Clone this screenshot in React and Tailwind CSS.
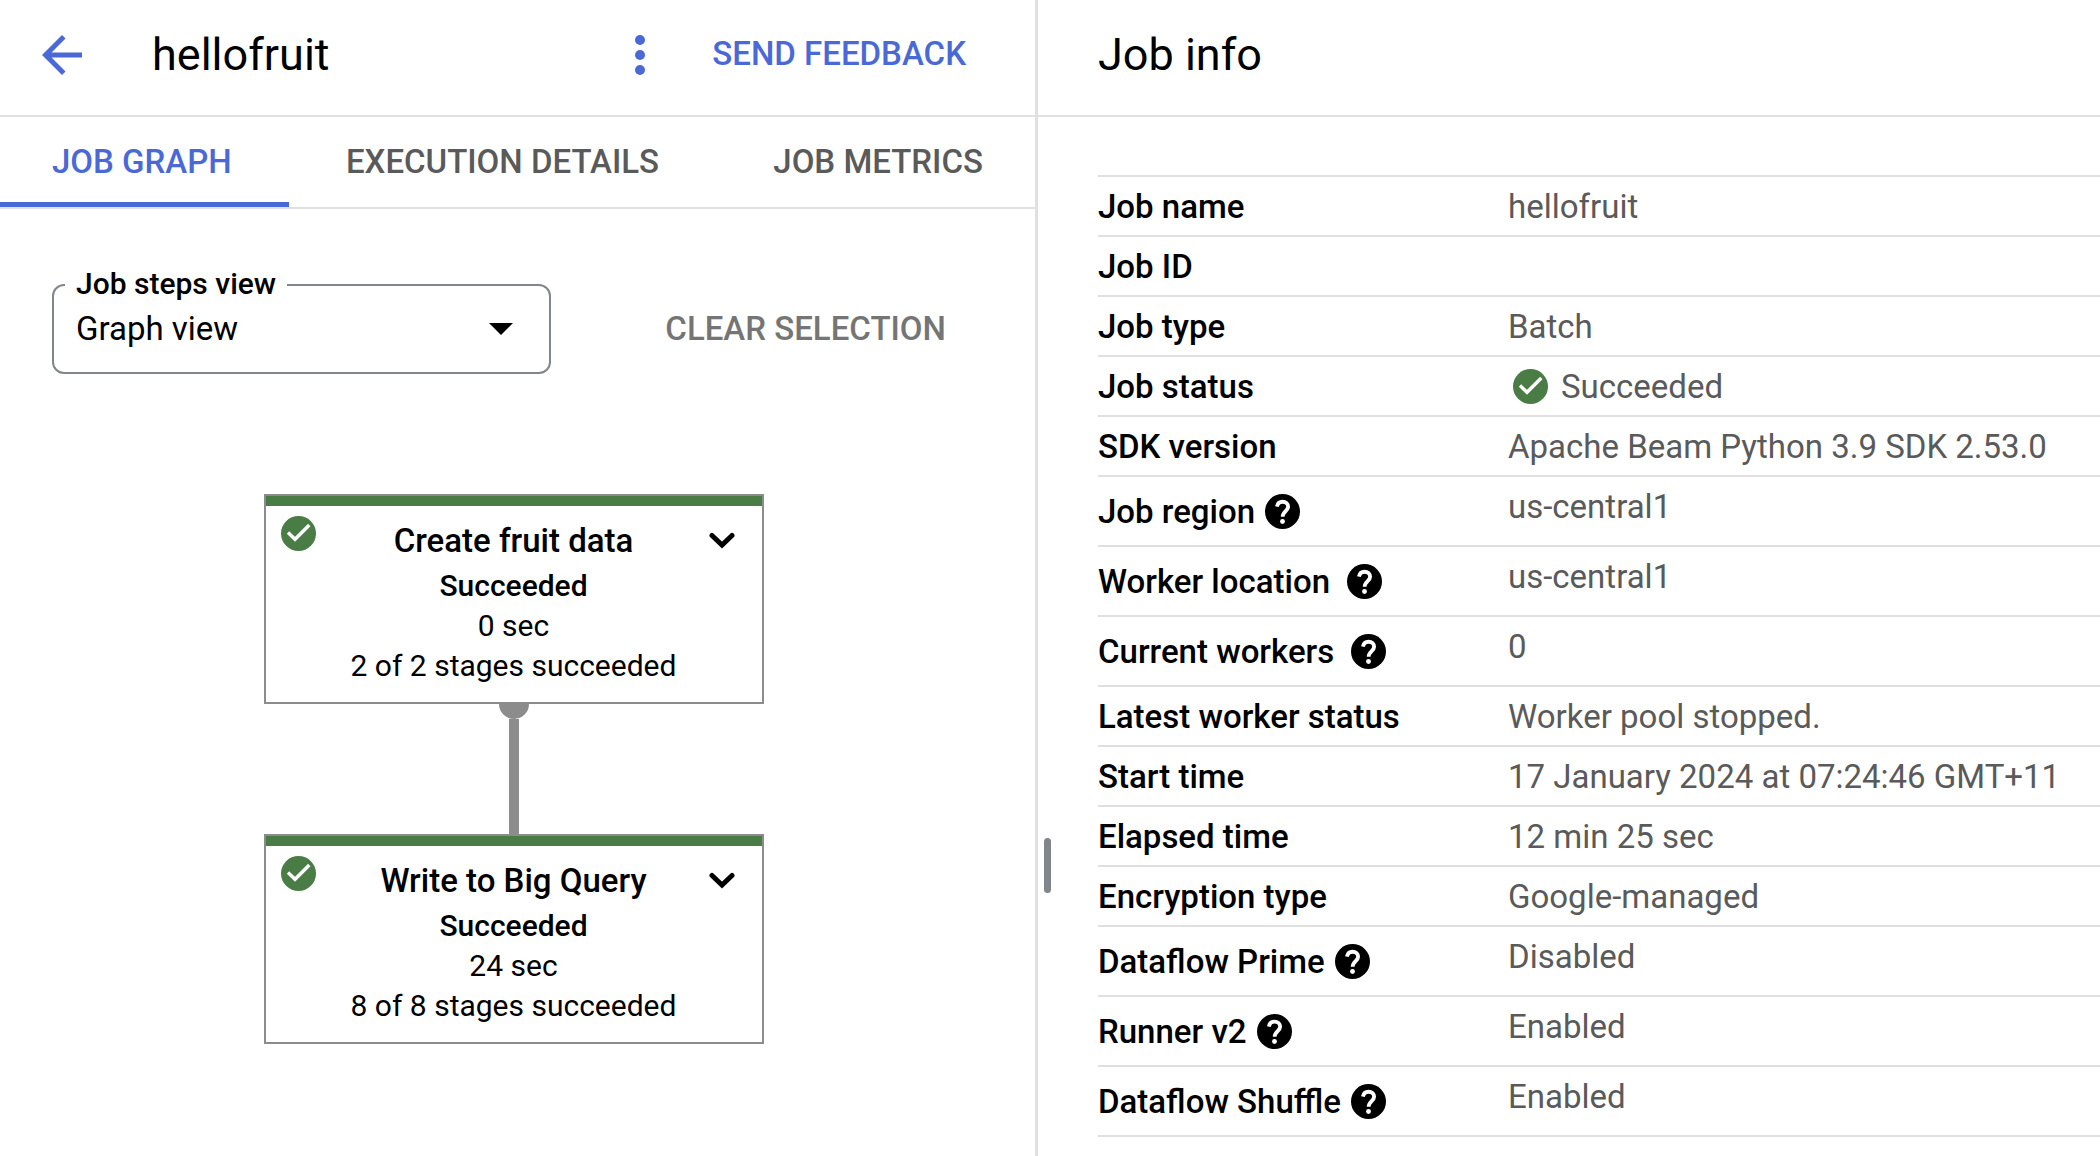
import React from 'react'

const jobInfo = [
  { label: 'Job name', value: 'hellofruit' },
  { label: 'Job ID', value: '' },
  { label: 'Job type', value: 'Batch' },
  { label: 'Job status', value: 'Succeeded', ok: true },
  { label: 'SDK version', value: 'Apache Beam Python 3.9 SDK 2.53.0' },
  { label: 'Job region', value: 'us-central1', help: true },
  { label: 'Worker location', value: 'us-central1', help: true, wide: true },
  { label: 'Current workers', value: '0', help: true, wide: true },
  { label: 'Latest worker status', value: 'Worker pool stopped.' },
  { label: 'Start time', value: '17 January 2024 at 07:24:46 GMT+11' },
  { label: 'Elapsed time', value: '12 min 25 sec' },
  { label: 'Encryption type', value: 'Google-managed' },
  { label: 'Dataflow Prime', value: 'Disabled', help: true },
  { label: 'Runner v2', value: 'Enabled', help: true },
  { label: 'Dataflow Shuffle', value: 'Enabled', help: true },
]

const CheckIcon = () => (
  <svg viewBox="0 0 35 35" className="size-[35px] shrink-0" aria-hidden="true">
    <circle cx="17.5" cy="17.5" r="17.5" fill="#4a7c46" />
    <path d="M7 16.5L14 23.3L28.3 9" fill="none" stroke="#fff" strokeWidth="3.4" />
  </svg>
)

const HelpIcon = () => (
  <svg viewBox="2 2 20 20" className="size-[35px] shrink-0" aria-hidden="true">
    <circle cx="12" cy="12" r="10" fill="#000" />
    <path
      d="M8.8 9.2C9.2 7.3 10.4 6.4 12 6.4c2 0 3.2 1.2 3.2 2.9 0 2.4-3.1 2.6-3.1 5.7"
      fill="none"
      stroke="#fff"
      strokeWidth="2.2"
    />
    <circle cx="12" cy="17.7" r="1.4" fill="#fff" />
  </svg>
)

const StepNode = ({ title, time, stages }) => (
  <div className="w-[500px] h-[210px] border-2 border-[#8c8c8c] bg-white text-center text-black">
    <div className="h-[10px] bg-[#4a7c46]" />
    <div className="flex items-start pl-[15px] pr-[27px] pt-[10px]">
      <CheckIcon />
      <h3 className="flex-1 pt-[5px] pl-[3px] text-[33px] leading-[40px] font-medium">{title}</h3>
      <button type="button" aria-label={`Expand ${title}`} className="pt-[16px]">
        <svg viewBox="0 0 26 18" className="w-[26px] h-[18px]">
          <path d="M3 3.5L13 13L23 3.5" fill="none" stroke="#000" strokeWidth="5" strokeLinecap="round" />
        </svg>
      </button>
    </div>
    <p className="pt-[5px] text-[30px] leading-[40px] font-medium">Succeeded</p>
    <p className="text-[30px] leading-[40px]">{time}</p>
    <p className="text-[30px] leading-[40px]">{stages}</p>
  </div>
)

const App = () => {
  return (
    <div className="grid min-h-screen grid-cols-[1038fr_1062fr] bg-white font-[Roboto,sans-serif] text-black">
      {/* Job graph */}
      <main className="border-r-[3px] border-[#e0e0e0]">
        <header className="flex h-[117px] items-center border-b-2 border-[#e0e0e0] pb-[5px] pl-[42px] pr-[69px]">
          <button type="button" aria-label="Back">
            <svg viewBox="4 4 16 16" className="size-[40px]" fill="#4a69d6">
              <path d="M20 11H7.83l5.59-5.59L12 4l-8 8 8 8 1.41-1.41L7.83 13H20v-2z" />
            </svg>
          </button>
          <h1 className="pl-[70px] text-[45px] leading-[60px]">hellofruit</h1>
          <button type="button" aria-label="More actions" className="ml-auto">
            <svg viewBox="0 0 10 40" className="w-[10px] h-[40px]" fill="#4a69d6">
              <circle cx="5" cy="5" r="5" />
              <circle cx="5" cy="20" r="5" />
              <circle cx="5" cy="35" r="5" />
            </svg>
          </button>
          <button type="button" className="pb-[2px] pl-[67px] text-[33px] leading-[40px] font-medium text-[#4a69d6]">
            SEND FEEDBACK
          </button>
        </header>

        <nav className="flex h-[92px] justify-between border-b-2 border-[#e0e0e0] text-[33px] leading-[40px] font-medium text-[#5a5a5a]">
          <a href="#graph" className="border-b-[5px] border-[#4a69d6] pl-[52px] pr-[57px] pt-[25px] text-[#4a69d6]">
            JOB GRAPH
          </a>
          <a href="#details" className="pt-[25px]">EXECUTION DETAILS</a>
          <a href="#metrics" className="pl-[57px] pr-[52px] pt-[25px]">JOB METRICS</a>
        </nav>

        <div className="flex items-center justify-between pl-[52px] pr-[89px] pt-[75px]">
          <div className="relative">
            <label htmlFor="view" className="absolute left-[13px] -top-[18px] bg-white px-[11px] text-[30px] leading-[36px] font-medium">
              Job steps view
            </label>
            <select
              id="view"
              className="block h-[90px] w-[499px] appearance-none rounded-[12px] border-2 border-[#80868b] bg-white px-[22px] text-[33px]"
            >
              <option>Graph view</option>
            </select>
            <svg viewBox="0 0 24 12" className="pointer-events-none absolute right-[38px] top-[39px] w-[24px] h-[12px]">
              <path d="M0 0H24L12 12Z" />
            </svg>
          </div>
          <button type="button" className="text-[33px] leading-[40px] font-medium text-[#757575]">CLEAR SELECTION</button>
        </div>

        <div className="flex flex-col items-center pt-[120px] pr-[8px]">
          <StepNode title="Create fruit data" time="0 sec" stages="2 of 2 stages succeeded" />
          <div className="h-[15px] w-[30px] rounded-b-full bg-[#8c8c8c]" />
          <div className="h-[115px] w-[10px] bg-[#8c8c8c]" />
          <StepNode title="Write to Big Query" time="24 sec" stages="8 of 8 stages succeeded" />
        </div>
      </main>

      {/* Job info */}
      <aside className="relative">
        <div className="absolute left-[6px] top-[838px] h-[55px] w-[7px] rounded-full bg-[#80868b]" />
        <header className="flex h-[117px] items-center border-b-2 border-[#e0e0e0] pb-[5px] pl-[60px]">
          <h2 className="text-[45px] leading-[60px]">Job info</h2>
        </header>
        <div className="pl-[60px] pt-[58px]">
          <table className="w-full border-t-2 border-[#e0e0e0] text-left text-[33px] leading-[40px]">
            <tbody>
              {jobInfo.map((row) => (
                <tr key={row.label} className={`border-b-2 border-[#e0e0e0] ${row.help ? 'h-[70px]' : 'h-[60px]'}`}>
                  <th scope="row" className="w-[410px] font-medium">
                    <span className={`flex items-center ${row.wide ? 'gap-[17px]' : 'gap-[10px]'}`}>
                      <span className="pt-[2px]">{row.label}</span>
                      {row.help && <HelpIcon />}
                    </span>
                  </th>
                  <td className="align-top pt-[9px] text-[#5a5a5a]">
                    <span className="flex items-center gap-[13px]">
                      {row.ok && <span className="pl-[5px]"><CheckIcon /></span>}
                      <span className="pt-px">{row.value}</span>
                    </span>
                  </td>
                </tr>
              ))}
            </tbody>
          </table>
        </div>
      </aside>
    </div>
  )
}

export default App
